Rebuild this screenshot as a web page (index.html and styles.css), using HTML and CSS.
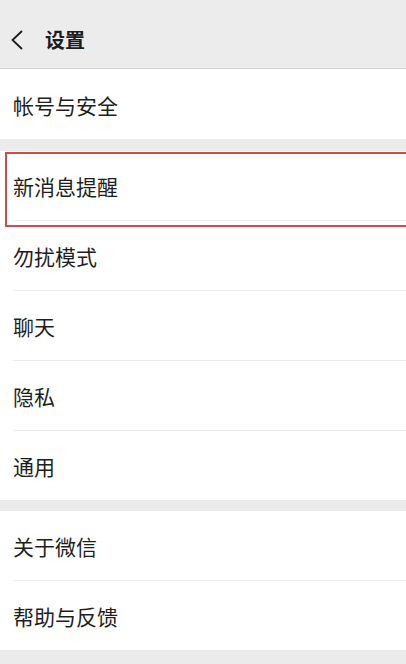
FILE: index.html
```html
<!DOCTYPE html>
<html lang="zh-CN">
<head>
<meta charset="utf-8">
<title>设置</title>
<link rel="stylesheet" href="styles.css">
</head>
<body>
<div class="screen">
  <header class="topbar">
    <svg class="back" width="16" height="22" viewBox="0 0 16 22" aria-hidden="true">
      <path d="M13 2 L3.5 11 L13 20" fill="none" stroke="#1c1c1c" stroke-width="1.8"/>
    </svg>
    <h1 class="title">设置</h1>
  </header>

  <section class="group first">
    <div class="row"><span class="label">帐号与安全</span></div>
  </section>

  <section class="group">
    <div class="row highlighted"><span class="label">新消息提醒</span><span class="mark"></span></div>
    <div class="row"><span class="label">勿扰模式</span></div>
    <div class="row"><span class="label">聊天</span></div>
    <div class="row"><span class="label">隐私</span></div>
    <div class="row"><span class="label">通用</span></div>
  </section>

  <section class="group last">
    <div class="row"><span class="label">关于微信</span></div>
    <div class="row"><span class="label">帮助与反馈</span></div>
  </section>
</div>
</body>
</html>
```

FILE: styles.css
```css
html, body {
  margin: 0;
  padding: 0;
  background: #ebebeb;
}

.screen {
  width: 406px;
  height: 664px;
  overflow: hidden;
  font-family: "Noto Sans CJK SC", "Noto Sans", sans-serif;
  color: #1e1e1e;
  background: #ebebeb;
}

.topbar {
  height: 69px;
  box-sizing: border-box;
  border-bottom: 1px solid #d6d6d6;
  background: #ececec;
  display: flex;
  align-items: center;
  padding: 11px 0 0 9px;
}

.back {
  display: block;
}

.title {
  margin: 0 0 0 20px;
  font-size: 20px;
  font-weight: 700;
  line-height: 1;
  color: #1c1c1c;
}

.group {
  background: #ffffff;
  margin-top: 12px;
}

.group.first {
  margin-top: 0;
}

.group.last {
  margin-top: 11px;
}

.row {
  position: relative;
  height: 69px;
  box-sizing: border-box;
  display: flex;
  align-items: center;
  margin-left: 13px;
  padding: 2px 0 0 0;
}

.row + .row {
  height: 70px;
  border-top: 1px solid #ececec;
}

.first .row {
  height: 70px;
}

.label {
  font-size: 21px;
  line-height: 1;
}

.mark {
  position: absolute;
  left: -8px;
  right: -10px;
  top: 1px;
  height: 75px;
  box-sizing: border-box;
  border: 2px solid #cc4b4b;
  pointer-events: none;
}
```
